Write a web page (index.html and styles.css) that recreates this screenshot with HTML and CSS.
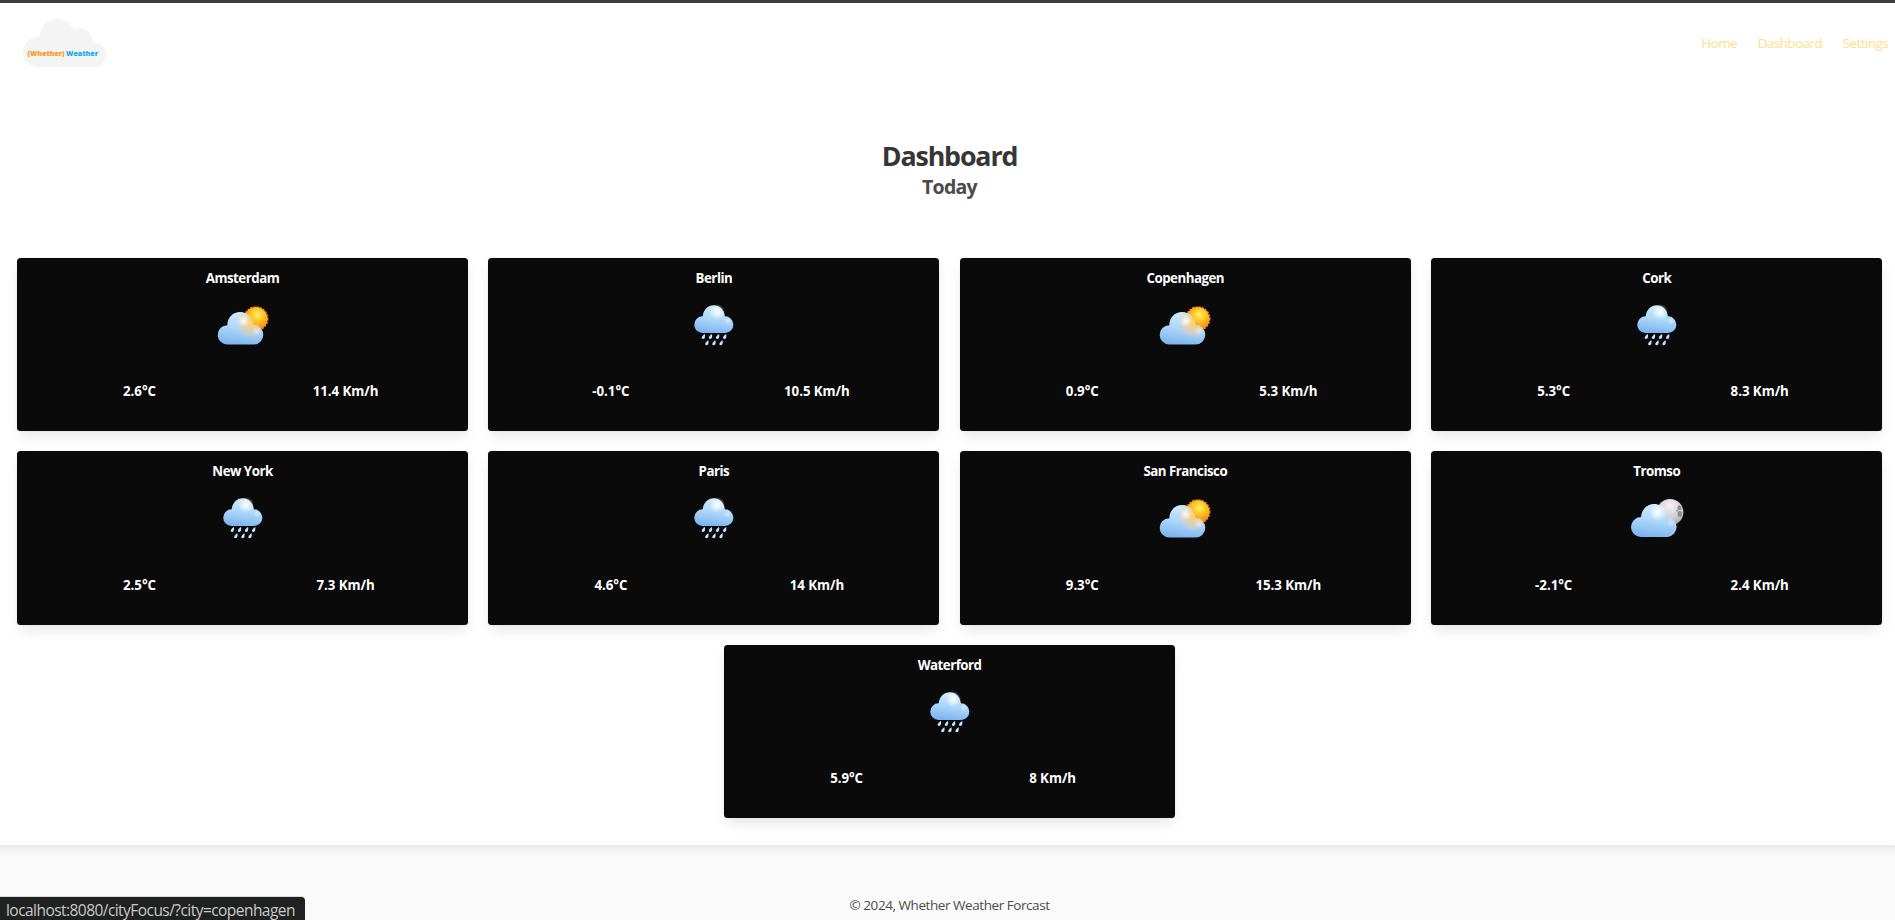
FILE: index.html
```
<!DOCTYPE html>
<html lang="en">
<head>
<meta charset="utf-8">
<title>Whether Weather</title>
<link rel="stylesheet" href="styles.css">
</head>
<body>
<svg class="defs" width="0" height="0" aria-hidden="true">
  <defs>
    <linearGradient id="cloud" x1="0.6" y1="0" x2="0.4" y2="1"><stop offset="0" stop-color="#d0ecfb"/><stop offset=".5" stop-color="#aed7f9"/><stop offset="1" stop-color="#7cb4f0"/></linearGradient>
    <radialGradient id="shine"><stop offset="0" stop-color="#fff"/><stop offset=".25" stop-color="#fff" stop-opacity=".75"/><stop offset="1" stop-color="#fff" stop-opacity="0"/></radialGradient>
    <radialGradient id="glow" gradientUnits="userSpaceOnUse" cx="51" cy="33" r="16"><stop offset="0" stop-color="#ffd35a"/><stop offset=".4" stop-color="#f0cd9a" stop-opacity=".85"/><stop offset="1" stop-color="#e8cfae" stop-opacity="0"/></radialGradient>
    <radialGradient id="sun" cx=".57" cy=".33" r=".65"><stop offset="0" stop-color="#fff27a"/><stop offset=".3" stop-color="#ffd42e"/><stop offset=".7" stop-color="#ffa41d"/><stop offset="1" stop-color="#fb7c10"/></radialGradient>
    <radialGradient id="moon" cx=".5" cy=".25" r=".75"><stop offset="0" stop-color="#f6f1f4"/><stop offset=".6" stop-color="#d3ccd3"/><stop offset="1" stop-color="#aaa3ab"/></radialGradient>
    <path id="drop" d="M1.7-2.7C2-.5 2 2.2-.2 2.3C-2.4 2.2-1.9-.5 1.7-2.7Z" fill="#c4e6fb"/>
    <symbol id="partly" viewBox="10.5 3 64 64">
      <circle cx="55.4" cy="28.7" r="11.6" fill="url(#sun)"/>
      <circle cx="55.4" cy="28.7" r="11.8" fill="none" stroke="#fb8f18" stroke-width="1.5" stroke-dasharray="1.9 1.4"/>
      <path d="M27 54.6A9.7 9.7 0 0 1 26.8 35.2C27 27.5 32.5 22.1 39.6 22.1C46.5 22.1 52 27.3 52.8 34.8A9.9 9.9 0 0 1 53 54.6Z" fill="url(#cloud)"/>
      <path d="M27 54.6A9.7 9.7 0 0 1 26.8 35.2C27 27.5 32.5 22.1 39.6 22.1C46.5 22.1 52 27.3 52.8 34.8A9.9 9.9 0 0 1 53 54.6Z" fill="url(#glow)"/>
      <circle cx="43.3" cy="31" r="6.5" fill="url(#shine)" opacity=".9"/>
      <circle cx="56" cy="41" r="4.5" fill="url(#shine)" opacity=".5"/>
    </symbol>
    <symbol id="rain" viewBox="11.7 3 64 64">
      <path d="M32.2 43A8.2 8.2 0 0 1 32.4 26.3C33 19.8 37.8 15.2 43.4 15.2C49.2 15.2 54 19.8 54.6 26.3A8.3 8.3 0 0 1 54.8 43Z" fill="url(#cloud)"/>
      <circle cx="46.8" cy="22" r="8" fill="url(#shine)"/>
      <circle cx="57.5" cy="31" r="3.5" fill="url(#shine)" opacity=".45"/>
      <use href="#drop" x="32.9" y="46.8"/><use href="#drop" x="40" y="46.8"/><use href="#drop" x="47.1" y="46.8"/><use href="#drop" x="54.2" y="46.8"/>
      <use href="#drop" x="36.4" y="52.9"/><use href="#drop" x="43.5" y="52.9"/><use href="#drop" x="50.6" y="52.9"/>
    </symbol>
    <symbol id="overcast" viewBox="14.2 1.1 64 64">
      <circle cx="59.3" cy="27.3" r="13.3" fill="url(#moon)"/>
      <ellipse cx="68.6" cy="22.8" rx="2" ry="2.5" fill="#918b94"/>
      <ellipse cx="69" cy="29" rx="2.2" ry="2.8" fill="#8f8992"/>
      <circle cx="66.2" cy="25.8" r=".9" fill="#938d96"/>
      <path d="M30 52A9.9 9.9 0 0 1 30.2 32.2C30.8 24.5 36.2 19 43.2 19C50.2 19 55.8 24.4 56.5 32.1A10 10 0 0 1 57 52Z" fill="url(#cloud)"/>
      <circle cx="46.8" cy="27.5" r="9" fill="url(#shine)"/>
      <circle cx="60" cy="38" r="4" fill="url(#shine)" opacity=".4"/>
    </symbol>
  </defs>
</svg>

<header class="navbar">
  <svg class="logo" width="84" height="49" viewBox="23 19 84 49">
    <path d="M38 67C29.5 67 23 60.300 23 52C23 43.500 29.500 37 38 37H40C40 26.500 48 19 57.500 19C64.500 19 71 23 73.700 29C83.500 25.500 93 33 93 43C101 42.300 106.200 48 106.200 55C106.200 61.500 101.200 67 94.500 67Z" fill="#f4f4f4"/>
    <text class="logo-text" x="27.6" y="55.8" textLength="37" lengthAdjust="spacingAndGlyphs" fill="#ff9412">(Whether)</text>
    <text class="logo-text" x="66" y="55.8" textLength="32" lengthAdjust="spacingAndGlyphs" fill="#0fa9ea">Weather</text>
  </svg>
  <nav class="menu"><a>Home</a><a>Dashboard</a><a>Settings</a></nav>
</header>

<main>
  <div class="heading">
    <h1>Dashboard</h1>
    <h2>Today</h2>
  </div>
  <section class="cards">
    <article class="card"><h3>Amsterdam</h3><svg class="icon"><use href="#partly"/></svg><div class="stats"><span>2.6°C</span><span>11.4 Km/h</span></div></article>
    <article class="card"><h3>Berlin</h3><svg class="icon"><use href="#rain"/></svg><div class="stats"><span>-0.1°C</span><span>10.5 Km/h</span></div></article>
    <article class="card"><h3>Copenhagen</h3><svg class="icon"><use href="#partly"/></svg><div class="stats"><span>0.9°C</span><span>5.3 Km/h</span></div></article>
    <article class="card"><h3>Cork</h3><svg class="icon"><use href="#rain"/></svg><div class="stats"><span>5.3°C</span><span>8.3 Km/h</span></div></article>
    <article class="card"><h3>New York</h3><svg class="icon"><use href="#rain"/></svg><div class="stats"><span>2.5°C</span><span>7.3 Km/h</span></div></article>
    <article class="card"><h3>Paris</h3><svg class="icon"><use href="#rain"/></svg><div class="stats"><span>4.6°C</span><span>14 Km/h</span></div></article>
    <article class="card"><h3>San Francisco</h3><svg class="icon"><use href="#partly"/></svg><div class="stats"><span>9.3°C</span><span>15.3 Km/h</span></div></article>
    <article class="card"><h3>Tromso</h3><svg class="icon"><use href="#overcast"/></svg><div class="stats"><span>-2.1°C</span><span>2.4 Km/h</span></div></article>
    <article class="card"><h3>Waterford</h3><svg class="icon"><use href="#rain"/></svg><div class="stats"><span>5.9°C</span><span>8 Km/h</span></div></article>
  </section>
</main>

<footer class="footer"><p>© 2024, Whether Weather Forcast</p></footer>
<div class="status">localhost:8080/cityFocus/?city=copenhagen</div>
</body>
</html>
```
FILE: styles.css
```
* { box-sizing: border-box; }
body {
  margin: 0;
  height: 920px;
  overflow: hidden;
  display: flex;
  flex-direction: column;
  border-top: 3px solid #3d3b3b;
  background: #fff;
  font-family: "Segoe UI", "Open Sans", "Noto Sans", sans-serif;
  font-size: 13.5px;
  color: #4a4a4a;
}
.defs { position: absolute; }
h1, h2, h3, p { margin: 0; }
.navbar {
  display: flex;
  justify-content: space-between;
  align-items: flex-start;
  height: 82px;
  padding: 16px 7px 0 23px;
}
.logo { display: block; }
.logo-text { font: 800 7px "Open Sans", sans-serif; }
.menu { display: flex; gap: 20.5px; padding-top: 14px; line-height: 21px; letter-spacing: -.58px; color: #ffe08a; }
.heading { padding-top: 53px; height: 173px; text-align: center; padding-left: 4px; }
h1 { font-size: 26.8px; line-height: 36px; font-weight: 700; letter-spacing: -1.15px; color: #363636; }
h2 { font-size: 19.5px; line-height: 26px; font-weight: 700; letter-spacing: -.75px; color: #4a4a4a; }
.cards {
  display: flex;
  flex-wrap: wrap;
  justify-content: center;
  gap: 20.3px;
  padding: 0 12.6px 0 16.8px;
}
.card {
  width: 451.1px;
  height: 173.2px;
  display: flex;
  flex-direction: column;
  align-items: center;
  background: #0a0a0a;
  color: #fff;
  border-radius: 3.5px;
  box-shadow: 0 7px 14px -2px rgba(10,10,10,.1), 0 0 0 1px rgba(10,10,10,.02);
  padding-top: 10px;
  font-size: 13.3px;
  font-weight: 700;
}
h3 { font-size: inherit; line-height: 21px; letter-spacing: -.5px; }
.icon { display: block; width: 64px; height: 64px; margin-top: 4px; }
.stats { display: grid; grid-template-columns: 206px 206px; text-align: center; margin-top: 24.4px; line-height: 21px; letter-spacing: -.05px; }
.footer {
  flex: 1;
  margin-top: 27px;
  padding: 50px 0 0 4px;
  background: #fafafa linear-gradient(rgba(10,10,10,.07), rgba(10,10,10,.03) 5px, rgba(10,10,10,0) 12px);
  text-align: center;
  line-height: 21px;
  letter-spacing: -.44px;
}
.status {
  position: absolute;
  left: 0;
  bottom: 0;
  width: 305px;
  height: 23px;
  padding-left: 6px;
  background: #202221;
  box-shadow: 0 -1px 0 #d5d9d8;
  border-radius: 0 4px 0 0;
  color: #c8cac9;
  font-size: 15.5px;
  line-height: 27px;
  letter-spacing: -.55px;
  white-space: nowrap;
}
```
